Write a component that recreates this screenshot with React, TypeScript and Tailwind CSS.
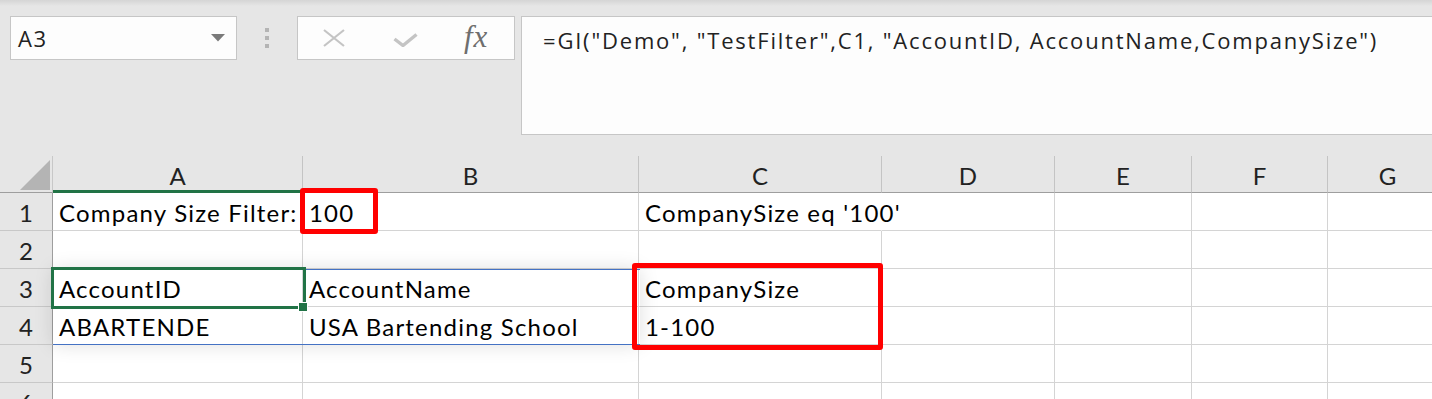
import React from "react";

const cols = ["A", "B", "C", "D", "E", "F", "G"];

const rows: string[][] = [
  ["Company Size Filter:", "100", "CompanySize eq '100'", "", "", "", ""],
  ["", "", "", "", "", "", ""],
  ["AccountID", "AccountName", "CompanySize", "", "", "", ""],
  ["ABARTENDE", "USA Bartending School", "1-100", "", "", "", ""],
  ["", "", "", "", "", "", ""],
  ["", "", "", "", "", "", ""],
];

const cellFont = "font-['Lato','Liberation_Sans',sans-serif] text-[24px]";
const uiFont = "font-['Open_Sans','Liberation_Sans',sans-serif]";

const App = () => {
  return (
    <div className="w-[1432px] h-[399px] overflow-hidden bg-white">
      {/* formula bar area */}
      <div className="relative h-[156px] bg-[#e6e6e6]">
        <div className="absolute inset-x-0 top-0 h-[6px] bg-gradient-to-b from-[#d5d5d5] to-[#e6e6e6]" />
        <div className="flex items-start pt-[16px] pl-[10px]">
          {/* name box */}
          <div className="flex items-center justify-between w-[227px] h-[44px] bg-[#fdfdfd] border border-[#c6c6c6] pl-[7px] pr-[11px]">
            <span className={`${uiFont} text-[22px] leading-[28px] tracking-[1.5px] text-[#222]`}>A3</span>
            <svg width="14" height="8" viewBox="0 0 14 8">
              <path d="M0 0 H14 L7 7.5 Z" fill="#7a7a7a" />
            </svg>
          </div>

          {/* grip dots */}
          <div className="flex flex-col gap-[4px] mt-[12px] ml-[28px] mr-[28px]">
            <div className="w-[4px] h-[4px] bg-[#b4b4b4]" />
            <div className="w-[4px] h-[4px] bg-[#b4b4b4]" />
            <div className="w-[4px] h-[4px] bg-[#b4b4b4]" />
          </div>

          {/* cancel / enter / fx */}
          <div className="flex items-center w-[218px] h-[44px] bg-[#fdfdfd] border border-[#c6c6c6]">
            <svg className="ml-[25px]" width="22" height="18" viewBox="0 0 22 18">
              <path d="M1 1 L21 17 M21 1 L1 17" stroke="#c4c4c4" strokeWidth="2.2" fill="none" />
            </svg>
            <svg className="ml-[48px] mt-[4px]" width="25" height="14" viewBox="0 0 25 14">
              <path d="M1.5 6 L10 12.5 L23.5 1.5" stroke="#c4c4c4" strokeWidth="3.4" fill="none" />
            </svg>
            <span className="ml-[46px] font-['Liberation_Serif',serif] italic text-[31px] leading-[30px] tracking-[1px] text-[#6e6e6e] -mt-[2px]">
              fx
            </span>
          </div>

          {/* formula input */}
          <div className="flex-1 -mr-[4px] ml-[6px] h-[119px] bg-[#fdfdfd] border border-[#c6c6c6] pl-[21px] pt-[9px]">
            <span className={`${uiFont} text-[22px] leading-[28px] tracking-[1.8px] text-[#222] whitespace-nowrap`}>
              =GI("Demo", "TestFilter",C1, "AccountID, AccountName,CompanySize")
            </span>
          </div>
        </div>
      </div>

      {/* sheet */}
      <div className="relative">
        <div className={`grid grid-cols-[53px_250px_336px_243px_173px_137px_136px_120px] bg-white ${cellFont} text-black`}>
          {/* corner */}
          <div className="relative h-[37px] bg-[#e6e6e6] border-r border-b border-r-[#c8c8c8] border-b-[#9e9e9e]">
            <svg className="absolute left-[20px] top-[4px]" width="30" height="30" viewBox="0 0 30 30">
              <path d="M30 0 V30 H0 Z" fill="#b4b4b4" />
            </svg>
          </div>
          {cols.map((c) => (
            <div
              key={c}
              className="h-[37px] flex items-center justify-center pt-[3px] bg-[#e6e6e6] border-r border-b border-r-[#c4c4c4] border-b-[#9e9e9e] text-[#222]"
            >
              {c}
            </div>
          ))}

          {rows.map((r, ri) => (
            <React.Fragment key={ri}>
              <div className="h-[38px] flex items-center justify-center pt-[2px] bg-[#e6e6e6] border-r border-b border-r-[#9e9e9e] border-b-[#c8c8c8] text-[#222]">
                {ri + 1}
              </div>
              {r.map((v, ci) => (
                <div
                  key={ci}
                  className={`h-[38px] flex items-center pl-[6px] pt-[2px] tracking-[1.2px] whitespace-nowrap border-b border-b-[#d4d4d4] border-r ${
                    ri === 0 && ci === 2 ? "border-r-transparent" : "border-r-[#d4d4d4]"
                  }`}
                >
                  {v}
                </div>
              ))}
            </React.Fragment>
          ))}
        </div>

        {/* selected column marker */}
        <div className="absolute left-[53px] top-[34px] w-[250px] h-[3px] bg-[#217346]" />

        {/* pasted table shadow and edges */}
        <div className="absolute left-[53px] top-[113px] w-[587px] h-[76px] shadow-[0_0_18px_rgba(0,0,0,0.13)]" />
        <div className="absolute left-[303px] top-[113px] w-[337px] h-px bg-[#4472c4]" />
        <div className="absolute left-[53px] top-[188px] w-[587px] h-px bg-[#4472c4]" />

        {/* active cell A3 */}
        <div className="absolute left-[51px] top-[111px] w-[255px] h-[42px] border-[3px] border-[#217346]" />
        <div className="absolute left-[299px] top-[147px] w-[8px] h-[8px] bg-[#217346] outline outline-1 outline-white" />

        {/* highlights */}
        <div className="absolute left-[300px] top-[32px] w-[78px] h-[46px] border-[5px] border-[#ff0000] rounded-[3px]" />
        <div className="absolute left-[632px] top-[107px] w-[251px] h-[87px] border-[5px] border-[#ff0000] rounded-[3px]" />
      </div>
    </div>
  );
};

export default App;
